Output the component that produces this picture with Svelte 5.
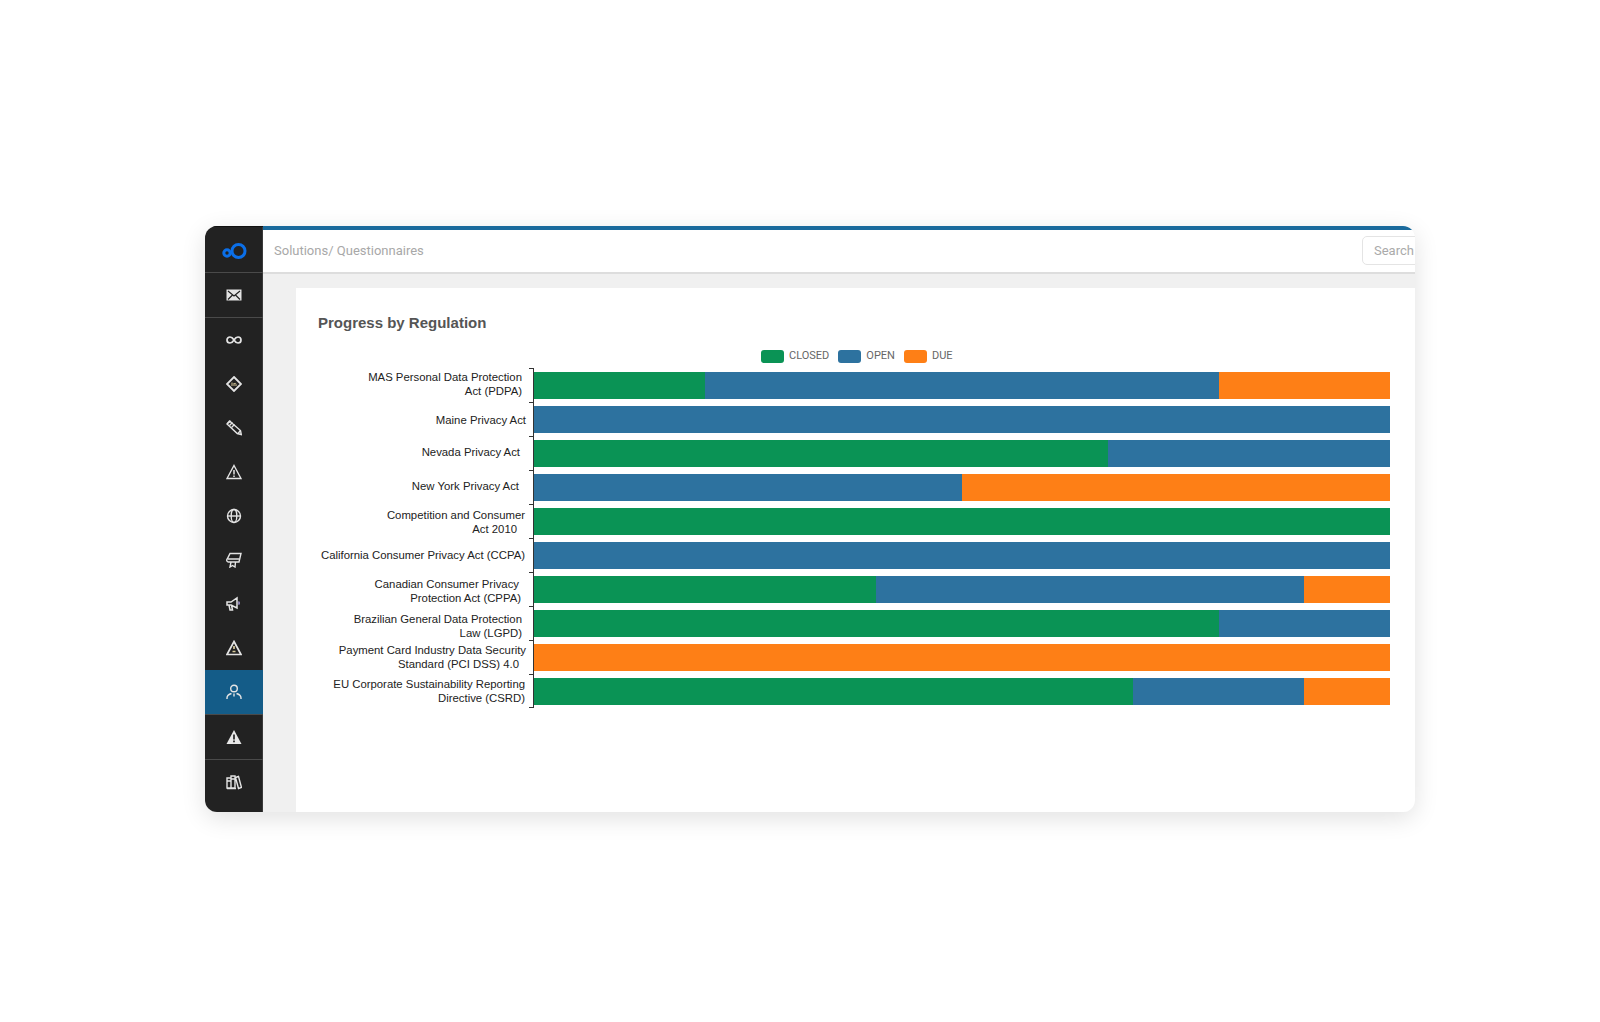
<script>
	// Chart data, widths in percent
	const rows = [
		{ lines: [['MAS Personal Data Protection', 7], ['Act (PDPA)', 7]], dy: -1, closed: 20, open: 60, due: 20 },
		{ lines: [['Maine Privacy Act', 3]], dy: 1, closed: 0, open: 100, due: 0 },
		{ lines: [['Nevada Privacy Act', 9]], dy: -1, closed: 67, open: 33, due: 0 },
		{ lines: [['New York Privacy Act', 10]], dy: -1, closed: 0, open: 50, due: 50 },
		{ lines: [['Competition and Consumer', 4], ['Act 2010', 12]], dy: 1, closed: 100, open: 0, due: 0 },
		{ lines: [['California Consumer Privacy Act (CCPA)', 4]], dy: 0, closed: 0, open: 100, due: 0 },
		{ lines: [['Canadian Consumer Privacy', 10], ['Protection Act (CPPA)', 8]], dy: 2, closed: 40, open: 50, due: 10 },
		{ lines: [['Brazilian General Data Protection', 7], ['Law (LGPD)', 7]], dy: 3, closed: 80, open: 20, due: 0 },
		{ lines: [['Payment Card Industry Data Security', 3], ['Standard (PCI DSS) 4.0', 10]], dy: 0, closed: 0, open: 0, due: 100 },
		{ lines: [['EU Corporate Sustainability Reporting', 4], ['Directive (CSRD)', 4]], dy: 0, closed: 70, open: 20, due: 10 }
	];
	const legend = [
		{ key: 'closed', label: 'CLOSED' },
		{ key: 'open', label: 'OPEN' },
		{ key: 'due', label: 'DUE' }
	];
</script>

<div class="page">
	<div class="window">
		<nav class="sidebar">
			<div class="item logo sep">
				<svg viewBox="0 0 26 20">
					<circle cx="6" cy="13" r="3.200" />
					<circle cx="17.500" cy="11" r="6.500" />
				</svg>
			</div>
			<div class="item sep">
				<svg viewBox="0 0 16 16">
					<rect x="0.500" y="2.500" width="15" height="11" fill="#e4e4e4" stroke="none" />
					<path d="M2 4l6 5 6-5M2 12.500l4.500-4.500M14 12.500l-4.500-4.500" stroke="#222" stroke-width="1.200" />
				</svg>
			</div>
			<div class="item">
				<svg viewBox="0 0 16 16" stroke-width="1.700"><path d="M8 8C6.500 5.500 5.500 5 4 5a3 3 0 0 0 0 6c1.500 0 2.500-.5 4-3s2.500-3 4-3a3 3 0 0 1 0 6c-1.500 0-2.500-.5-4-3z" /></svg>
			</div>
			<div class="item">
				<svg viewBox="0 0 16 16" stroke-width="1.800">
					<path d="M8 1l7 7-7 7-7-7z" />
					<path d="M6 6.500v3.500M8 10V7M8 8c.8-1 2-.8 2 .5V10" stroke-width="1" stroke="#d8c99a" />
				</svg>
			</div>
			<div class="item">
				<svg viewBox="0 0 16 16" stroke-width="1.400">
					<path d="M3.500 1l11 9.500.8 4-4-1L1 4z" />
					<path d="M1.500 3.500L5 1M3.500 5.500l3-3M5.500 7.500l3-3M12 13.500l2.500-3" />
				</svg>
			</div>
			<div class="item">
				<svg viewBox="0 0 16 16" stroke-width="1.400">
					<path d="M8 1.500L15 14.500H1z" />
					<path d="M8 6v4.500M8 11.500v1.500" stroke-width="1.500" />
				</svg>
			</div>
			<div class="item">
				<svg viewBox="0 0 16 16" stroke-width="1.400">
					<circle cx="8" cy="8" r="6.500" />
					<ellipse cx="8" cy="8" rx="2.800" ry="6.500" />
					<path d="M1.500 8h13" />
				</svg>
			</div>
			<div class="item">
				<svg viewBox="0 0 16 16" stroke-width="1.400">
					<path d="M4 1.500h11l-2 8.500H2.500a1.800 1.800 0 0 1-1.300-3z" />
					<path d="M2 7h11M5 10l-1 5 2.500-1.500L9 15l.5-5" />
				</svg>
			</div>
			<div class="item">
				<svg viewBox="0 0 16 16" stroke-width="1.500">
					<path d="M1 6h4l6-4v10L5 9H1zM3 9l1 5h2.500L5.500 9" />
					<path d="M12.500 5.500a2 2 0 0 1 0 3" stroke="#a79ad8" />
				</svg>
			</div>
			<div class="item">
				<svg viewBox="0 0 16 16" stroke-width="1.700">
					<path d="M8 1.500L15 14.500H1z" />
					<path d="M8 6v3M6.500 11.500h3" stroke="#d8c99a" />
				</svg>
			</div>
			<div class="item active sep">
				<svg viewBox="0 0 16 16" stroke-width="1.400">
					<circle cx="8" cy="4.500" r="3.300" />
					<path d="M1 15v-1c0-2.500 2-3.800 4.500-4.500M15 15v-1c0-2.500-2-3.800-4.500-4.500M8 9.500v3" />
				</svg>
			</div>
			<div class="item sep">
				<svg viewBox="0 0 16 16">
					<path d="M8 1L15.500 15H.500z" fill="#e8e8e8" stroke="none" />
					<path d="M8 5.500v5M8 11.500v1.800" stroke="#222" stroke-width="1.700" />
				</svg>
			</div>
			<div class="item">
				<svg viewBox="0 0 16 16" stroke-width="1.400">
					<path d="M1 4h4v10H1zM5 2h4v12H5zM9.500 3.500l3-1 3 11-3 1zM1 14.500h9M1 7h4M5 5h4" />
				</svg>
			</div>
		</nav>

		<div class="content">
			<header class="topbar">
				<span class="crumbs">Solutions/ Questionnaires</span>
				<div class="search">Search</div>
			</header>

			<main class="main">
				<section class="card">
					<h2>Progress by Regulation</h2>

					<div class="legend">
						{#each legend as l}
							<span class="legend-item"><i class="swatch {l.key}"></i>{l.label}</span>
						{/each}
					</div>

					<div class="chart">
						{#each rows as row}
							<div class="row">
								<div class="label" style="transform: translateY({row.dy}px)">
									{#each row.lines as [text, inset]}
										<div style="padding-right: {inset}px">{text}</div>
									{/each}
								</div>
								<div class="tick"></div>
								<div class="bar">
									{#each legend as l}
										{#if row[l.key] > 0}
											<div class={l.key} style="width: {row[l.key]}%"></div>
										{/if}
									{/each}
								</div>
							</div>
						{/each}
					</div>
				</section>
			</main>
		</div>
	</div>
</div>

<style>
	:global(body) {
		background: #fff;
	}

	.page {
		height: 1022px;
		padding: 226px 185px 0 205px;
		box-sizing: border-box;
	}

	.window {
		display: flex;
		height: 586px;
		border-radius: 12px;
		overflow: hidden;
		background: #fff;
		box-shadow: 0 6px 24px rgba(0, 0, 0, 0.12);
	}

	.sidebar {
		width: 58px;
		flex: none;
		background: #222;
		display: flex;
		flex-direction: column;
		border-top: 1px solid #111;
		box-shadow: inset -1px 0 #3a3a3a;
		box-sizing: border-box;
	}

	.item {
		height: 44px;
		flex: none;
		display: flex;
		align-items: center;
		justify-content: center;
	}

	.item svg {
		width: 16px;
		height: 16px;
		fill: none;
		stroke: #e4e4e4;
	}

	.logo {
		height: 45px;
	}

	.logo svg {
		width: 26px;
		height: 20px;
		stroke: #0b6fe8;
		stroke-width: 3;
	}

	.sep {
		border-bottom: 1px solid #4a4a4a;
	}

	.active {
		background: #145c88;
	}

	.content {
		flex: 1;
		min-width: 0;
		display: flex;
		flex-direction: column;
		background: #f0f0f0;
	}

	.topbar {
		height: 48px;
		flex: none;
		box-sizing: border-box;
		background: #fff;
		border-top: 4px solid #1a6a9c;
		border-bottom: 2px solid #ddd;
		display: flex;
		align-items: center;
		justify-content: space-between;
		padding: 0 0 2px 11px;
		overflow: hidden;
	}

	.crumbs {
		font: 13px Roboto, sans-serif;
		color: #a8a8a8;
	}

	.search {
		flex: none;
		width: 65px;
		margin-right: -12px;
		height: 29px;
		box-sizing: border-box;
		border: 1px solid #e4e4e4;
		border-radius: 5px;
		padding-left: 11px;
		font: 13px/27px Roboto, sans-serif;
		color: #aaa;
	}

	.main {
		flex: 1;
		padding: 14px 0 0 33px;
		display: flex;
		min-height: 0;
	}

	.card {
		flex: 1;
		background: #fff;
		padding: 25px 25px 0 22px;
		min-width: 0;
	}

	h2 {
		margin: 0;
		font: bold 15px/20px "Liberation Sans", Arial, sans-serif;
		color: #555;
	}

	.legend {
		display: flex;
		margin: 16px 0 0 443px;
		height: 14px;
		font: 11px/14px Roboto, sans-serif;
		color: #666;
	}

	.legend-item {
		display: flex;
		align-items: center;
		margin-right: 9px;
	}

	.swatch {
		width: 23px;
		height: 13px;
		border-radius: 3px;
		margin-right: 5px;
	}

	.closed {
		background: #0a9355;
	}

	.open {
		background: #2d729f;
	}

	.due {
		background: #fe7f16;
	}

	.chart {
		margin-top: 5px;
	}

	.row {
		display: flex;
		height: 34px;
	}

	.label {
		width: 211px;
		flex: none;
		display: flex;
		flex-direction: column;
		justify-content: center;
		align-items: flex-end;
		font: 11.350px/14px "Liberation Sans", Arial, sans-serif;
		color: #222;
		white-space: nowrap;
	}

	.tick {
		width: 4px;
		flex: none;
		border-top: 1px solid #333;
		border-right: 1px solid #333;
	}

	.row:last-child .tick {
		border-bottom: 1px solid #333;
	}

	.bar {
		flex: 1;
		display: flex;
		height: 27px;
		margin-top: 4px;
	}
</style>
